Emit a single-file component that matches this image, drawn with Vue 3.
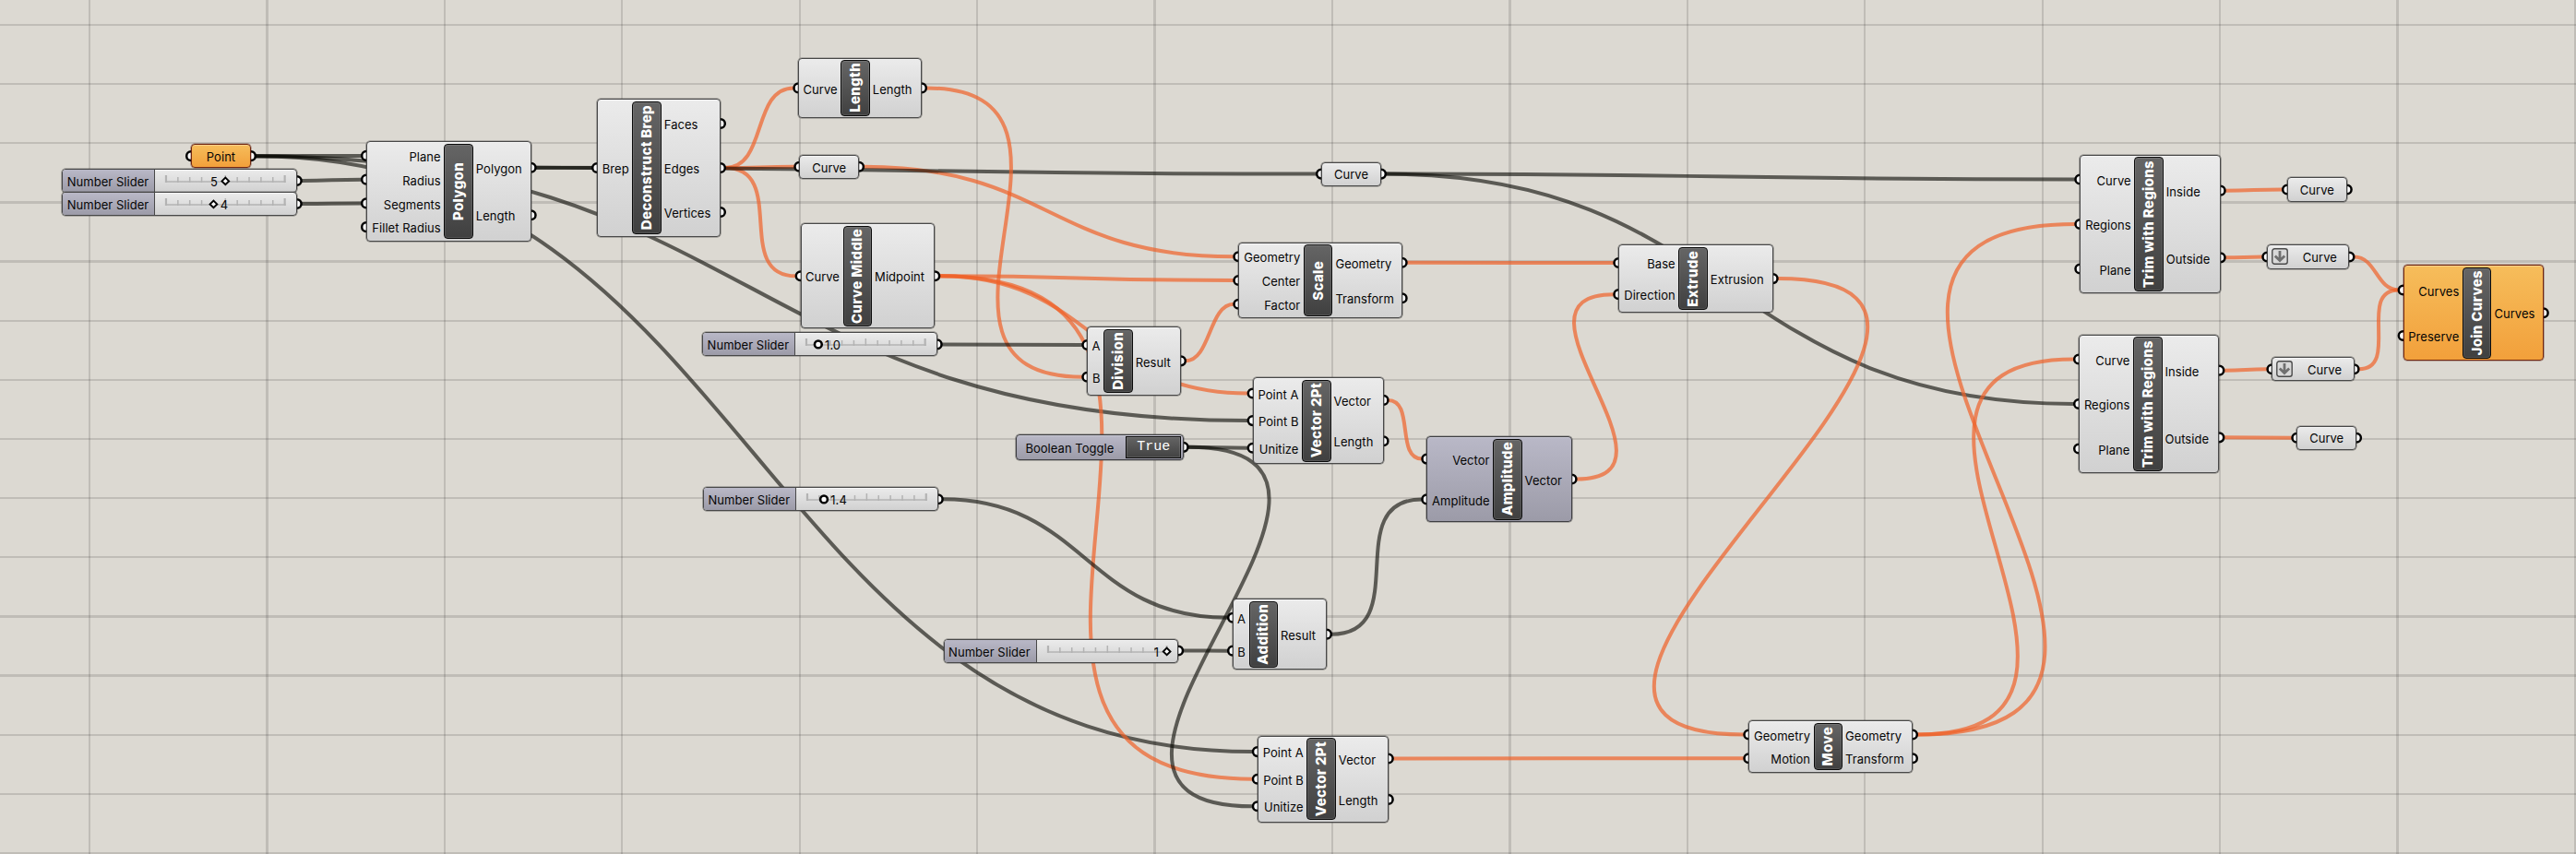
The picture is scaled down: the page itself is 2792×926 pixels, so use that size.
<script setup>
// Node body boxes are [x, y, width, height] on the canvas.
const components = [
  { id: 'polygon', title: 'Polygon', box: [397, 153.3, 178.7, 108.4], tx: 84.3, ins: ['Plane', 'Radius', 'Segments', 'Fillet Radius'], outs: ['Polygon', 'Length'] },
  { id: 'brep', title: 'Deconstruct Brep', box: [647, 107.3, 134, 149.4], tx: 38.3, ins: ['Brep'], outs: ['Faces', 'Edges', 'Vertices'] },
  { id: 'length', title: 'Length', box: [865.3, 62.5, 133.7, 65.8], tx: 46, ins: ['Curve'], outs: ['Length'] },
  { id: 'middle', title: 'Curve Middle', box: [867.6, 242.3, 145.7, 114], tx: 46, ins: ['Curve'], outs: ['Midpoint'] },
  { id: 'division', title: 'Division', box: [1178.3, 354, 101.7, 74.7], tx: 17.9, ins: ['A', 'B'], outs: ['Result'] },
  { id: 'scale', title: 'Scale', box: [1342.3, 262.7, 177.4, 82.6], tx: 70.6, ins: ['Geometry', 'Center', 'Factor'], outs: ['Geometry', 'Transform'] },
  { id: 'vecA', title: 'Vector 2Pt', box: [1357.6, 409, 142, 94.2], tx: 53.5, ins: ['Point A', 'Point B', 'Unitize'], outs: ['Vector', 'Length'] },
  { id: 'amplitude', title: 'Amplitude', box: [1546.3, 473, 157.3, 93], tx: 71.8, ins: ['Vector', 'Amplitude'], outs: ['Vector'], tone: 'violet' },
  { id: 'extrude', title: 'Extrude', box: [1754.3, 265.3, 167.4, 73.6], tx: 65, ins: ['Base', 'Direction'], outs: ['Extrusion'] },
  { id: 'addition', title: 'Addition', box: [1336, 649, 102, 77.3], tx: 17.5, ins: ['A', 'B'], outs: ['Result'] },
  { id: 'vecB', title: 'Vector 2Pt', box: [1362.8, 797.6, 142, 94.2], tx: 53.5, ins: ['Point A', 'Point B', 'Unitize'], outs: ['Vector', 'Length'] },
  { id: 'move', title: 'Move', box: [1895.3, 781, 177.7, 56.7], tx: 70.3, ins: ['Geometry', 'Motion'], outs: ['Geometry', 'Transform'] },
  { id: 'trimA', title: 'Trim with Regions', box: [2254.3, 167.6, 152.4, 150.8], tx: 59, ins: ['Curve', 'Regions', 'Plane'], outs: ['Inside', 'Outside'] },
  { id: 'trimB', title: 'Trim with Regions', box: [2253, 362.6, 152.4, 150.8], tx: 59, ins: ['Curve', 'Regions', 'Plane'], outs: ['Inside', 'Outside'] },
  { id: 'join', title: 'Join Curves', box: [2604.6, 287, 152.2, 104.4], tx: 64.3, ins: ['Curves', 'Preserve'], outs: ['Curves'], tone: 'amber' },
]

const params = [
  { id: 'point', label: 'Point', box: [207, 156, 65, 26.3], tone: 'amber' },
  { id: 'curveA', label: 'Curve', box: [866.3, 167.7, 64.8, 26.2] },
  { id: 'curveB', label: 'Curve', box: [1432, 175.5, 65, 26.2] },
  { id: 'curve1', label: 'Curve', box: [2479, 192.4, 64.8, 26.2] },
  { id: 'curve2', label: 'Curve', box: [2457.3, 265.4, 89.2, 26.2], flatten: true },
  { id: 'curve3', label: 'Curve', box: [2462.4, 387.2, 89.2, 26.2], flatten: true },
  { id: 'curve4', label: 'Curve', box: [2489.3, 461.6, 64.8, 26.2] },
]

const sliders = [
  { id: 's5', value: '5', at: 0.5, side: 'left', box: [67.4, 183, 254.4, 26], knob: 'diamond' },
  { id: 's4', value: '4', at: 0.4, side: 'right', box: [67.4, 208, 254.4, 26], knob: 'diamond' },
  { id: 's10', value: '1.0', at: 0.1, side: 'right', box: [761.3, 360.4, 254.4, 26], knob: 'ring' },
  { id: 's14', value: '1.4', at: 0.14, side: 'right', box: [762.2, 528.3, 254.6, 26], knob: 'ring' },
  { id: 's1', value: '1', at: 1, side: 'left', box: [1022.8, 692.5, 254.4, 26], knob: 'diamond' },
]

const toggle = { id: 'toggle', box: [1101.4, 470.7, 181.3, 28.3] }

// [source, output index, target, input index, colour]
const wires = [
  ['point', 0, 'polygon', 0, 'k'], ['point', 0, 'vecA', 1, 'k'], ['point', 0, 'vecB', 0, 'k'],
  ['s5', 0, 'polygon', 1, 'k'], ['s4', 0, 'polygon', 2, 'k'],
  ['polygon', 0, 'brep', 0, 'k'],
  ['brep', 1, 'length', 0, 'o'], ['brep', 1, 'curveA', 0, 'o'], ['brep', 1, 'middle', 0, 'o'],
  ['curveA', 0, 'scale', 0, 'o'], ['polygon', 0, 'curveB', 0, 'k'],
  ['curveB', 0, 'trimA', 0, 'k'], ['curveB', 0, 'trimB', 1, 'k'],
  ['length', 0, 'division', 1, 'o'], ['s10', 0, 'division', 0, 'k'],
  ['middle', 0, 'scale', 1, 'o'], ['middle', 0, 'vecA', 0, 'o'], ['middle', 0, 'vecB', 1, 'o'],
  ['division', 0, 'scale', 2, 'o'],
  ['toggle', 0, 'vecA', 2, 'k'], ['toggle', 0, 'vecB', 2, 'k'],
  ['vecA', 0, 'amplitude', 0, 'o'], ['s14', 0, 'addition', 0, 'k'], ['s1', 0, 'addition', 1, 'k'],
  ['addition', 0, 'amplitude', 1, 'k'], ['amplitude', 0, 'extrude', 1, 'o'],
  ['scale', 0, 'extrude', 0, 'o'], ['extrude', 0, 'move', 0, 'o'], ['vecB', 0, 'move', 1, 'o'],
  ['move', 0, 'trimA', 1, 'o'], ['move', 0, 'trimB', 0, 'o'],
  ['trimA', 0, 'curve1', 0, 'o'], ['trimA', 1, 'curve2', 0, 'o'],
  ['trimB', 0, 'curve3', 0, 'o'], ['trimB', 1, 'curve4', 0, 'o'],
  ['curve2', 0, 'join', 0, 'o'], ['curve3', 0, 'join', 0, 'o'],
]

const PAD = 2.7
const all = {}
for (const n of [...components, ...params, ...sliders, toggle]) all[n.id] = n

function rowY(n, count, i) {
  return n.box[1] + PAD + ((n.box[3] - PAD * 2) * (i + 0.5)) / count
}
function outPos(id, i) {
  const n = all[id]
  return [n.box[0] + n.box[2], rowY(n, n.outs ? n.outs.length : 1, i)]
}
function inPos(id, i) {
  const n = all[id]
  return [n.box[0], rowY(n, n.ins ? n.ins.length : 1, i)]
}
function wirePath([a, i, b, j]) {
  let [x0, y0] = outPos(a, i)
  let [x1, y1] = inPos(b, j)
  x0 += 5
  x1 -= 5
  const d = Math.max(Math.abs(x1 - x0) * 0.5, Math.abs(y1 - y0) * 0.75 - 19)
  return `M${x0} ${y0}C${x0 + d} ${y0} ${x1 - d} ${y1} ${x1} ${y1}`
}

const grips = []
for (const n of components) {
  n.ins.forEach((_, i) => grips.push(inPos(n.id, i)))
  n.outs.forEach((_, i) => grips.push(outPos(n.id, i)))
}
for (const n of params) grips.push(inPos(n.id, 0), outPos(n.id, 0))
for (const n of [...sliders, toggle]) grips.push(outPos(n.id, 0))

const vLines = Array.from({ length: 15 }, (_, i) => {
  const c = 97 + 192.43 * i
  const w = [1, 6, 8, 13].includes(i) ? 3 : 2
  return { x: Math.round(c - w / 2), w }
})
const hLines = Array.from({ length: 15 }, (_, i) => {
  const c = 26.8 + 64.17 * i
  const w = [3, 4, 10, 11].includes(i) ? 3 : 2
  return { y: Math.round(c - w / 2), w }
})
const ticks = Array.from({ length: 11 }, (_, i) => i)

const boxStyle = (n) => ({ left: n.box[0] + 'px', top: n.box[1] + 'px', width: n.box[2] + 'px', height: n.box[3] + 'px' })
</script>

<template>
  <main class="canvas">
    <svg class="layer" width="2792" height="926" viewBox="0 0 2792 926">
      <g class="grid">
        <rect v-for="l in vLines" :key="'v' + l.x" :x="l.x" y="0" :width="l.w" height="926" />
        <rect v-for="l in hLines" :key="'h' + l.y" x="0" :y="l.y" width="2792" :height="l.w" />
      </g>
      <path v-for="(w, i) in wires" :key="i" :d="wirePath(w)" :class="['wire', w[4]]" />
      <circle v-for="(g, i) in grips" :key="'g' + i" class="grip" :cx="g[0]" :cy="g[1]" r="4.8" />
    </svg>

    <section v-for="n in components" :key="n.id" :class="['node', n.tone]" :style="boxStyle(n)">
      <div class="ports ins" :style="{ width: n.tx + 'px' }">
        <span v-for="p in n.ins" :key="p" class="port">{{ p }}</span>
      </div>
      <h2 class="title"><span>{{ n.title }}</span></h2>
      <div class="ports outs">
        <span v-for="p in n.outs" :key="p" class="port">{{ p }}</span>
      </div>
    </section>

    <section v-for="n in params" :key="n.id" :class="['node', 'param', n.tone, { flat: n.flatten }]" :style="boxStyle(n)">
      <svg v-if="n.flatten" class="flatten" width="18" height="18" viewBox="0 0 18 18">
        <rect x="0.8" y="0.8" width="16.4" height="16.4" rx="2.5" />
        <path d="M9 3V13M3.8 8.4L9 13.6L14.2 8.4" />
      </svg>
      <span class="name">{{ n.label }}</span>
    </section>

    <section v-for="n in sliders" :key="n.id" class="node slider" :style="boxStyle(n)">
      <div class="label"><span>Number Slider</span></div>
      <svg class="track" width="153" height="24" viewBox="0 0 153 24">
        <g class="ruler">
          <path d="M11 13H142" />
          <path v-for="t in ticks" :key="t" :d="`M${12 + t * 12.9} 14V${t % 5 ? 8 : 6}`" :class="{ end: t % 10 === 0 }" />
        </g>
        <path v-if="n.knob === 'diamond'" class="knob" :d="`M${12 + n.at * 129 - 3.8} 12.4l3.8-3.8l3.8 3.8l-3.8 3.8z`" />
        <circle v-else class="knob ring" :cx="12 + n.at * 129" cy="12.4" r="3.9" />
        <text :x="12 + n.at * 129 + (n.side === 'left' ? -8.5 : 7.3)" y="18" :text-anchor="n.side === 'left' ? 'end' : 'start'">{{ n.value }}</text>
      </svg>
    </section>

    <section class="node violet toggle" :style="boxStyle(toggle)">
      <span class="name">Boolean Toggle</span>
      <b class="switch">True</b>
    </section>
  </main>
</template>

<style>
html, body { margin: 0; background: #dcd9d2; }
</style>

<style scoped>
.canvas {
  position: relative;
  width: 2792px;
  height: 926px;
  overflow: hidden;
  background: #dcd9d2;
  color: #050505;
  font: 400 13px/16px Inter, "Liberation Sans", sans-serif;
  letter-spacing: 0.04px;
}
.layer { position: absolute; inset: 0; }
.grid { fill: rgba(0, 0, 0, 0.125); }
.wire { fill: none; stroke-width: 4; }
.wire.k { stroke: rgba(5, 5, 0, 0.6); }
.wire.o { stroke: rgba(240, 97, 40, 0.7); }
.grip { fill: #fff; stroke: #000; stroke-width: 2.5; }
.node {
  position: absolute;
  box-sizing: border-box;
  display: flex;
  border: 1px solid #484848;
  border-radius: 4px;
  background: linear-gradient(#ebebeb, #d1d1d1);
  box-shadow: 0 0 0 0.6px rgba(50, 50, 50, 0.55), inset 0 1px 0 rgba(255, 255, 255, 0.5);
  white-space: nowrap;
}
.violet { background: linear-gradient(#b9b8c7, #9c9ba8); border-color: #3e3e42; box-shadow: 0 0 0 0.6px rgba(50, 50, 50, 0.55), inset 0 1px 0 rgba(255, 255, 255, 0.25); }
.amber { background: linear-gradient(#f6bd5b, #f2a03b); border-color: #71260f; box-shadow: 0 0 0 0.6px rgba(90, 30, 10, 0.5), inset 0 1px 0 rgba(255, 255, 255, 0.3); }
.ports { display: flex; flex-direction: column; padding: 1.7px 0; }
.ins { flex: none; box-sizing: border-box; align-items: flex-end; padding-right: 4.6px; }
.outs { align-items: flex-start; padding-left: 3px; }
.port { flex: 1; display: flex; align-items: center; position: relative; top: 1.2px; }
.title {
  flex: none;
  width: 31.5px;
  box-sizing: border-box;
  margin: 1.5px 0;
  margin-left: -1px;
  display: flex;
  align-items: center;
  justify-content: center;
  border: 1.4px solid #0a0a0a;
  border-radius: 4px;
  background: linear-gradient(#656565, #404040);
  box-shadow: inset 0 0 0 1px rgba(255, 255, 255, 0.1);
  color: #fff;
  font: 800 15px/18px Inter, "Liberation Sans", sans-serif;
  letter-spacing: 0.32px;
}
.title span { writing-mode: vertical-rl; transform: rotate(180deg); }
.param { align-items: center; justify-content: center; }
.param .name { position: relative; top: 0.8px; }
.param.flat { justify-content: flex-start; padding-left: 4px; }
.flat .name { margin-left: 15.5px; }
.flatten rect { fill: #d9d9d9; stroke: #4b4b4b; stroke-width: 1.4; }
.flatten path { fill: none; stroke: #707070; stroke-width: 2.8; }
.label {
  box-sizing: border-box;
  width: 100px;
  border-right: 1.4px solid #484848;
  border-radius: 3px 0 0 3px;
  background: linear-gradient(#b9b8c7, #9c9ba8);
  display: flex;
  align-items: center;
  justify-content: center;
}
.label span { position: relative; top: 1px; left: -0.8px; }
.track text { fill: #050505; }
.ruler path { fill: none; stroke: #b3b3b3; stroke-width: 1.5; }
.ruler .end { stroke-width: 2.2; }
.knob { fill: #fff; stroke: #000; stroke-width: 2; }
.knob.ring { stroke-width: 2.6; }
.toggle { align-items: center; justify-content: space-between; padding: 0 1.5px 0 9px; }
.toggle .name { position: relative; top: 1px; }
.switch {
  box-sizing: border-box;
  width: 60px;
  height: 23.5px;
  padding-top: 1.2px;
  border: 1.6px solid #0a0a0a;
  background: linear-gradient(#646464, #424242);
  box-shadow: inset 0 0 0 1px rgba(255, 255, 255, 0.12);
  color: #fff;
  font: 400 15px/20px "Liberation Mono", monospace;
  letter-spacing: 0;
  text-align: center;
}
</style>
